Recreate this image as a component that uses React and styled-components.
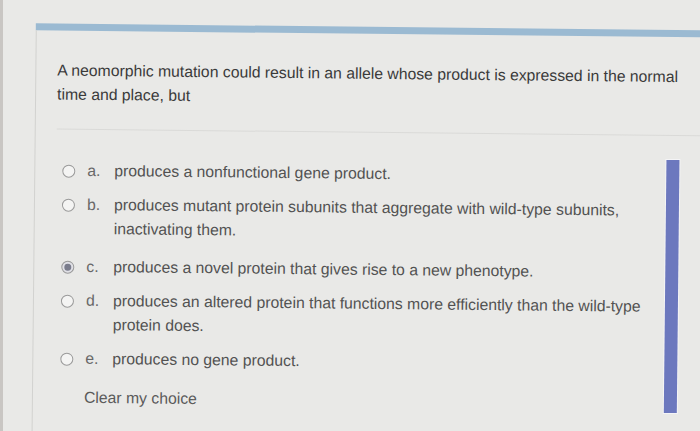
import React from "react";
import styled, { createGlobalStyle } from "styled-components";

const Global = createGlobalStyle`
  html, body { margin: 0; padding: 0; }
  body {
    background: #e9e9e7;
    font-family: "Liberation Sans", Arial, sans-serif;
    width: 700px;
    height: 431px;
    overflow: hidden;
  }
`;

const Frame = styled.div`
  height: 431px;
  box-sizing: border-box;
  border-left: 3px solid #c9c6c3;
  overflow: hidden;
`;

const Page = styled.div`
  padding: 23px 0 0 31px;
  height: 431px;
  box-sizing: border-box;
  transform: rotate(0.6deg);
  transform-origin: 0 200px;
`;

const TopBar = styled.div`
  height: 7px;
  background: #9bbad2;
  margin-right: -20px;
`;

const Panel = styled.div`
  border-left: 1px solid #d2d2d0;
  padding: 28px 0 0 21px;
  height: 420px;
  box-sizing: border-box;
`;

const Question = styled.div`
  font-size: 15.75px;
  line-height: 24px;
  color: #3a3a3a;
  width: 635px;
`;

const Rule = styled.div`
  height: 1px;
  background: #dadad8;
  margin: 22px 0 29px 0;
`;

const Body = styled.div`
  display: flex;
  justify-content: space-between;
  align-items: flex-start;
`;

const Options = styled.div`
  display: flex;
  flex-direction: column;
  gap: 10px;
  padding-left: 6px;
`;

const Option = styled.div`
  display: grid;
  grid-template-columns: 13px 15px 1fr;
  column-gap: 12px;
  align-items: start;
  font-size: 15.75px;
  line-height: 24px;
  color: #525252;
  margin-top: ${(p) => p.$extra || 0}px;
`;

const Radio = styled.span`
  width: 11px;
  height: 11px;
  margin-top: 6px;
  border-radius: 50%;
  border: 1px solid #9a9a9a;
  background: ${(p) => (p.$checked ? "#e0e0e6" : "#f4f4f3")};
  display: flex;
  align-items: center;
  justify-content: center;
  box-sizing: content-box;
  &::after {
    content: "";
    display: ${(p) => (p.$checked ? "block" : "none")};
    width: 7px;
    height: 7px;
    border-radius: 50%;
    background: #7a7c8c;
  }
`;

const Letter = styled.span`
  color: #686868;
`;

const Text = styled.span`
  width: 535px;
`;

const Clear = styled.div`
  font-size: 15.75px;
  line-height: 24px;
  color: #5a5a5a;
  margin: 15px 0 0 30px;
`;

const SideBar = styled.div`
  width: 13px;
  height: 253px;
  margin: -5px 21px 0 0;
  background: #6c78be;
  box-shadow: 0 0 0 1px #f4f4f6;
`;

const options = [
  { l: "a.", t: "produces a nonfunctional gene product." },
  {
    l: "b.",
    t: "produces mutant protein subunits that aggregate with wild-type subunits, inactivating them.",
  },
  { l: "c.", t: "produces a novel protein that gives rise to a new phenotype.", checked: true, extra: 4 },
  {
    l: "d.",
    t: "produces an altered protein that functions more efficiently than the wild-type protein does.",
  },
  { l: "e.", t: "produces no gene product." },
];

export default function App() {
  return (
    <>
      <Global />
      <Frame>
        <Page>
          <TopBar />
          <Panel>
            <Question>
              A neomorphic mutation could result in an allele whose product is expressed in the normal time and place, but
            </Question>
            <Rule />
            <Body>
              <div>
                <Options>
                  {options.map((o) => (
                    <Option key={o.l} $extra={o.extra}>
                      <Radio $checked={o.checked} />
                      <Letter>{o.l}</Letter>
                      <Text>{o.t}</Text>
                    </Option>
                  ))}
                </Options>
                <Clear>Clear my choice</Clear>
              </div>
              <SideBar />
            </Body>
          </Panel>
        </Page>
      </Frame>
    </>
  );
}
